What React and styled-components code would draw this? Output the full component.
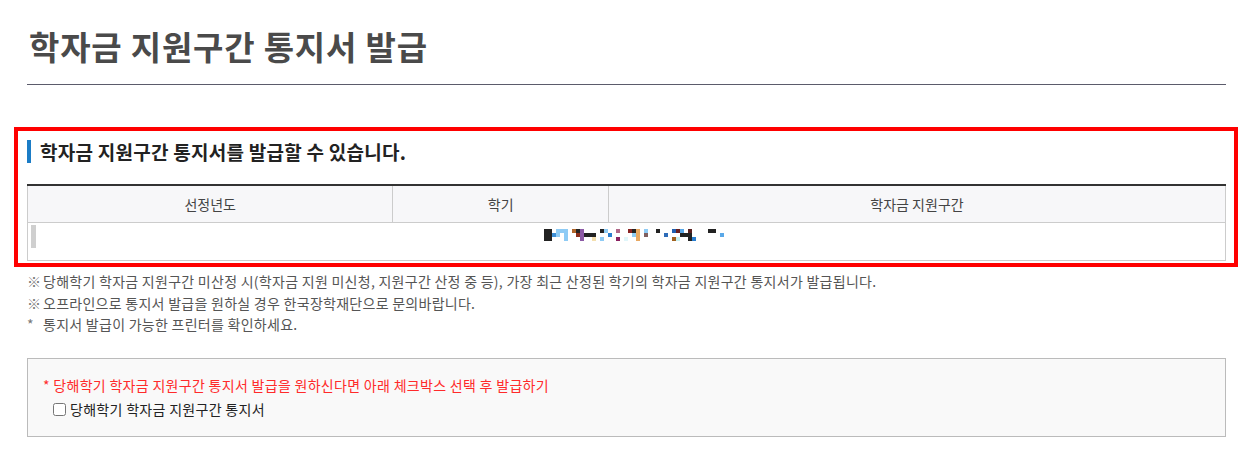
import styled, { createGlobalStyle } from "styled-components";

const GlobalStyle = createGlobalStyle`
  body {
    margin: 0;
    background: #fff;
    font-family: "Noto Sans CJK KR", "Noto Sans", sans-serif;
  }
`;

const Page = styled.div`
  padding: 0 18px 0 27px;
`;

const Title = styled.h2`
  margin: 0;
  padding: 26px 0 18px 2px;
  font-size: 33px;
  line-height: 40px;
  letter-spacing: 0.8px;
  font-weight: bold;
  color: #4a4a4a;
  border-bottom: 1px solid #5b5b6b;
`;

const Highlight = styled.section`
  margin: 42px -12px 0 -13px;
  padding: 9px 8px 2px 9px;
  border: 4px solid #ff0000;
`;

const Heading = styled.h3`
  margin: 0 0 21px;
  display: flex;
  align-items: center;
  gap: 9px;
  height: 23px;
  font-size: 19px;
  letter-spacing: 0.25px;
  font-weight: bold;
  color: #222;
  &::before {
    content: "";
    width: 4px;
    height: 23px;
    background: #1b7cc6;
  }
`;

const Table = styled.table`
  width: 100%;
  border-collapse: collapse;
  border-top: 2px solid #333;
  table-layout: fixed;
  font-size: 14px;
  color: #444;
`;

const Th = styled.th`
  height: 36px;
  padding: 0;
  background: #f7f7f9;
  border: 1px solid #ccc;
  border-top: none;
  font-weight: normal;
`;

const Td = styled.td`
  height: 37px;
  padding: 0;
  border: 1px solid #ccc;
  vertical-align: top;
`;

const CellRow = styled.div`
  display: grid;
  grid-template-columns: 1fr auto 1fr;
  padding: 2px 3px 0;
`;

const Grip = styled.span`
  width: 5px;
  height: 23px;
  background: #cfcfcf;
  justify-self: start;
`;

const Blur = styled.svg`
  display: block;
  margin: 4px 0 0 14px;
`;

const Notes = styled.ul`
  list-style: none;
  margin: 4px 0 0;
  padding: 0;
  font-size: 14px;
  letter-spacing: 0.27px;
  line-height: 21.5px;
  color: #555;
`;

const Mark = styled.span`
  display: inline-block;
  width: 16px;
  letter-spacing: 0;
  color: #777;
`;

const ApplyBox = styled.div`
  margin-top: 22px;
  padding: 16px 15px 17px;
  background: #f9f9f9;
  border: 1px solid #bbb;
  font-size: 14px;
  letter-spacing: 0.3px;
  line-height: 20px;
`;

const Alert = styled.p`
  margin: 0 0 4px;
  color: #ff2a2a;
`;

const Check = styled.label`
  display: flex;
  align-items: center;
  gap: 4px;
  padding-left: 10px;
  color: #222;
  input {
    margin: 2px 0 0;
    width: 13px;
    height: 13px;
  }
`;

const pixels = [
  [0, 0, 2, 3, "#222"],
  [2, 1, 1, 1, "#3d8fd6"],
  [3, 0, 3, 1, "#8ecbf5"],
  [3, 1, 1, 1, "#8ecbf5"],
  [5, 1, 1, 2, "#8ecbf5"],
  [7, 0, 1, 1, "#b0652a"],
  [8, 0, 1, 1, "#222"],
  [9, 0, 1, 3, "#8c5aa6"],
  [8, 1, 1, 1, "#8b2d1a"],
  [10, 1, 3, 1, "#222"],
  [12, 2, 1, 1, "#f4dfae"],
  [14, 0, 1, 1, "#222"],
  [15, 0, 1, 1, "#8ecbf5"],
  [16, 1, 1, 1, "#2a7fd0"],
  [14, 2, 1, 1, "#8ecbf5"],
  [18, 0, 1, 1, "#b06888"],
  [18, 2, 1, 1, "#8a2060"],
  [20, 2, 1, 1, "#e0f6fa"],
  [21, 0, 1, 1, "#8a2323"],
  [22, 0, 1, 1, "#222"],
  [22, 1, 1, 1, "#8ecbf5"],
  [23, 0, 1, 3, "#e8a862"],
  [25, 0, 1, 1, "#8ecbf5"],
  [25, 1, 1, 1, "#806060"],
  [28, 0, 1, 1, "#222"],
  [30, 1, 1, 1, "#2e6cb8"],
  [32, 0, 1, 1, "#2060b0"],
  [33, 0, 1, 1, "#6a2020"],
  [34, 0, 1, 1, "#5aa8e8"],
  [32, 2, 1, 1, "#a0601e"],
  [33, 2, 1, 1, "#c8f0f0"],
  [34, 1, 3, 1, "#222"],
  [36, 0, 1, 1, "#5a2020"],
  [36, 2, 1, 1, "#222"],
  [37, 2, 1, 1, "#2a7fd0"],
  [41, 0, 2, 1, "#222"],
  [44, 1, 1, 1, "#5aa8e8"],
];

const notes = [
  { mark: "※", text: "당해학기 학자금 지원구간 미산정 시(학자금 지원 미신청, 지원구간 산정 중 등), 가장 최근 산정된 학기의 학자금 지원구간 통지서가 발급됩니다." },
  { mark: "※", text: "오프라인으로 통지서 발급을 원하실 경우 한국장학재단으로 문의바랍니다." },
  { mark: "*", text: "통지서 발급이 가능한 프린터를 확인하세요." },
];

export default function App() {
  return (
    <Page>
      <GlobalStyle />
      <Title>학자금 지원구간 통지서 발급</Title>

      <Highlight>
        <Heading>학자금 지원구간 통지서를 발급할 수 있습니다.</Heading>
        <Table>
          <colgroup>
            <col style={{ width: "30.5%" }} />
            <col style={{ width: "18%" }} />
            <col />
          </colgroup>
          <thead>
            <tr>
              <Th>선정년도</Th>
              <Th>학기</Th>
              <Th>학자금 지원구간</Th>
            </tr>
          </thead>
          <tbody>
            <tr>
              <Td colSpan={3}>
                <CellRow>
                  <Grip />
                  <Blur width="180" height="12" viewBox="0 0 180 12">
                    {pixels.map(([x, y, w, h, c], i) => (
                      <rect key={i} x={x * 4} y={y * 4} width={w * 4} height={h * 4} fill={c} />
                    ))}
                  </Blur>
                  <span />
                </CellRow>
              </Td>
            </tr>
          </tbody>
        </Table>
      </Highlight>

      <Notes>
        {notes.map((n, i) => (
          <li key={i}>
            <Mark>{n.mark}</Mark>
            {n.text}
          </li>
        ))}
      </Notes>

      <ApplyBox>
        <Alert>* 당해학기 학자금 지원구간 통지서 발급을 원하신다면 아래 체크박스 선택 후 발급하기</Alert>
        <Check>
          <input type="checkbox" />
          당해학기 학자금 지원구간 통지서
        </Check>
      </ApplyBox>
    </Page>
  );
}
